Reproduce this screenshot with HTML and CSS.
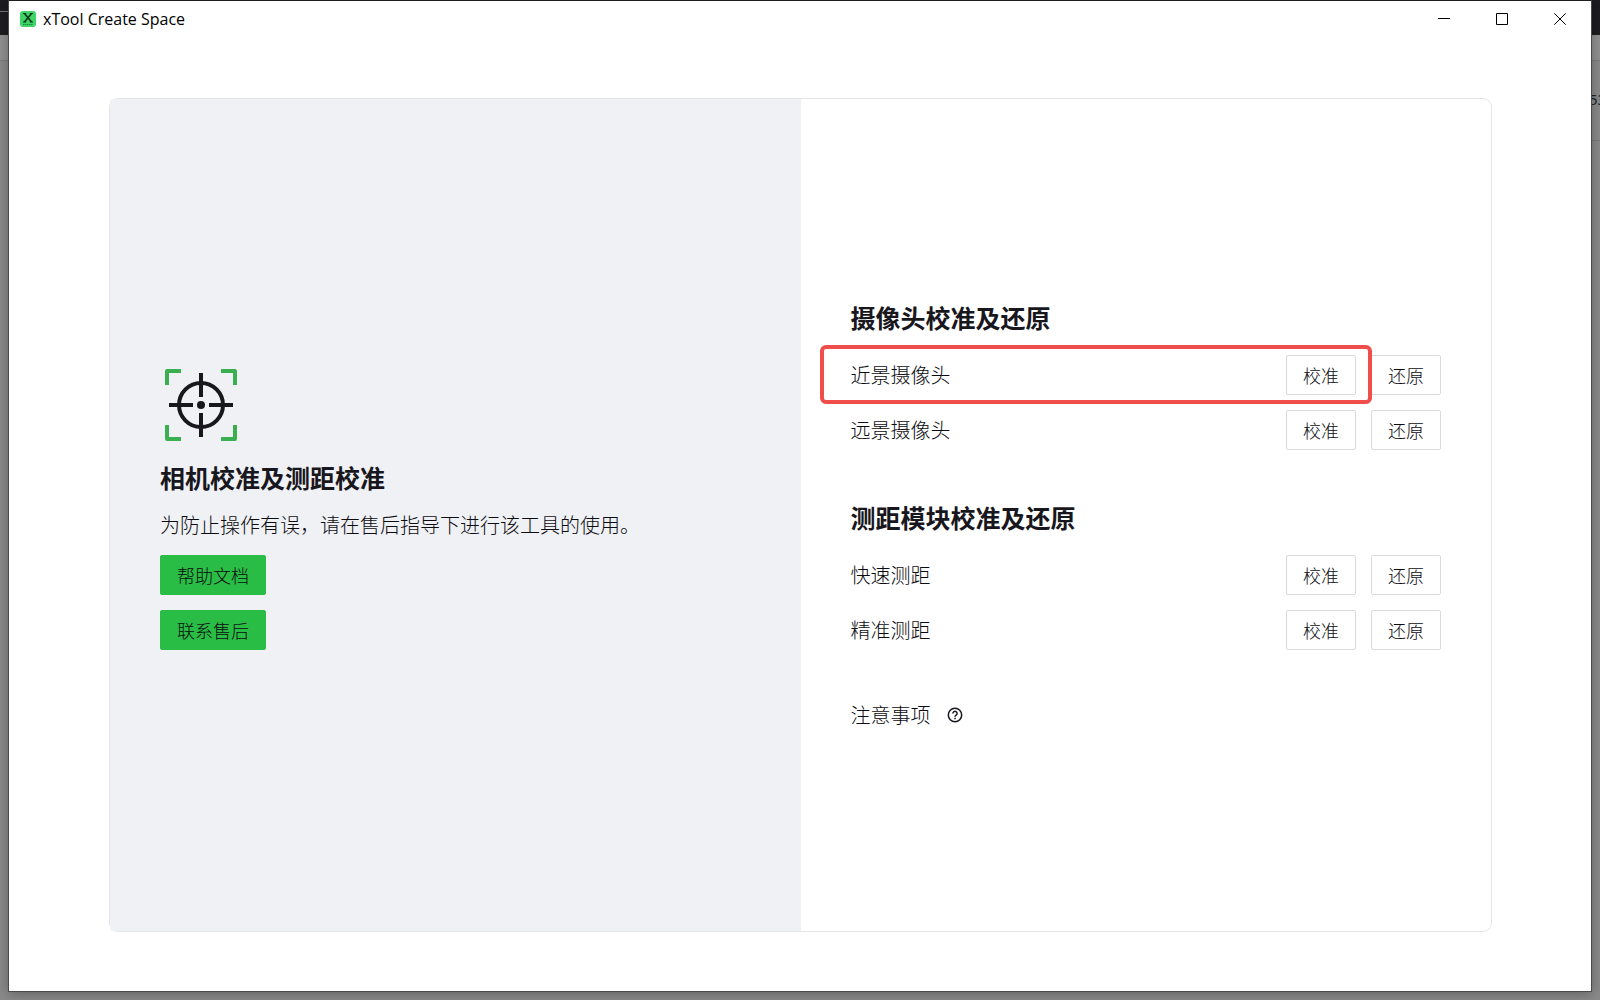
FILE: index.html
```html
<!DOCTYPE html>
<html lang="zh-CN">
<head>
<meta charset="utf-8">
<title>xTool Create Space</title>
<link rel="stylesheet" href="styles.css">
</head>
<body>
<div class="desktop">
  <span class="backdrop-number" aria-hidden="true">53</span>
  <div class="window">
    <header class="titlebar">
      <svg class="app-icon" viewBox="0 0 16 16" aria-hidden="true">
        <rect width="16" height="16" rx="3" fill="#3fd468"/>
        <path d="M3 2.500h3.200M9.800 2.500H13M3 11h3.200M9.800 11H13" stroke="#0b3d1c"/>
        <path d="M4.500 2.500l7 8.500M11.500 2.500l-7 8.500" stroke="#0b3d1c" stroke-width="1.800"/>
        <path d="M3 13.500h10" stroke="#1f8a42" stroke-dasharray="1.500 .5"/>
      </svg>
      <span class="app-name">xTool Create Space</span>
      <div class="window-controls">
        <button class="control" type="button" aria-label="最小化"><svg viewBox="0 0 12 12"><path d="M0 5.500h12"/></svg></button>
        <button class="control" type="button" aria-label="最大化"><svg viewBox="0 0 12 12"><path d="M.5.5h11v11H.5z"/></svg></button>
        <button class="control" type="button" aria-label="关闭"><svg viewBox="0 0 12 12"><path d="M.3.3l11.400 11.400M11.700.3L.3 11.700"/></svg></button>
      </div>
    </header>
    <main class="content">
      <div class="card">
        <section class="intro">
          <svg class="target" viewBox="0 0 80 80" fill="none" stroke-width="4" aria-hidden="true">
            <path d="M7 20V6H21M61 6H75V20M7 60V74H21M61 74H75V60" stroke="#3aaf50" stroke-linejoin="round"/>
            <g stroke="#18171d"><circle cx="41" cy="40" r="22"/><path d="M41 8v24M41 48v24M9 40h24M49 40h24"/></g>
            <circle cx="41" cy="40" r="4" fill="#18171d"/>
          </svg>
          <h1 class="heading intro-heading">相机校准及测距校准</h1>
          <p class="intro-text">为防止操作有误，请在售后指导下进行该工具的使用。</p>
          <button class="button button-primary" type="button">帮助文档</button>
          <button class="button button-primary" type="button">联系售后</button>
        </section>
        <section class="tools">
          <div class="group">
            <h2 class="heading">摄像头校准及还原</h2>
            <div class="row row-marked">
              <span class="label">近景摄像头</span>
              <button class="button" type="button">校准</button>
              <button class="button" type="button">还原</button>
            </div>
            <div class="row">
              <span class="label">远景摄像头</span>
              <button class="button" type="button">校准</button>
              <button class="button" type="button">还原</button>
            </div>
          </div>
          <div class="group">
            <h2 class="heading">测距模块校准及还原</h2>
            <div class="row">
              <span class="label">快速测距</span>
              <button class="button" type="button">校准</button>
              <button class="button" type="button">还原</button>
            </div>
            <div class="row">
              <span class="label">精准测距</span>
              <button class="button" type="button">校准</button>
              <button class="button" type="button">还原</button>
            </div>
          </div>
          <div class="notes">
            <span>注意事项</span>
            <button class="help" type="button" aria-label="注意事项说明">
              <svg viewBox="0 0 16 16" fill="none" stroke="#18171d" stroke-width="1.500"><circle cx="8" cy="8" r="6.700"/><path d="M5.900 6.400a2.100 2.100 0 1 1 3.200 1.800C8.300 8.700 8 9 8 9.700M8 10.800v1.500"/></svg>
            </button>
          </div>
        </section>
      </div>
    </main>
  </div>
</div>
</body>
</html>
```
FILE: styles.css
```css
* {
  box-sizing: border-box;
}

body {
  margin: 0;
  color: #0c0b10;
  font: 300 20px/30px "Noto Sans CJK SC", sans-serif;
}

.desktop {
  position: relative;
  display: flex;
  min-height: 100vh;
  padding: 0 8px 8px;
  overflow: hidden;
  background:
    linear-gradient(#777, #777) 0 11px / 8px 1px no-repeat,
    linear-gradient(#7b7b7b, #7b7b7b) 100% 140px / 8px 1px no-repeat,
    linear-gradient(#1d1c1f 35px, #929292 35px, #929292 60px, #7d7d7d 60px, #7d7d7d 61px, #8a8a8a 61px);
}

.backdrop-number {
  position: absolute;
  top: 84px;
  left: calc(100% - 11px);
  color: #20242e;
  font: 15px/30px "Noto Sans", sans-serif;
}

.window {
  position: relative;
  display: flex;
  flex: 1;
  flex-direction: column;
  border: 1px solid #4a4a4a;
  border-top-color: #1d1c1f;
  background: #fff;
  box-shadow: 0 2px 12px rgba(0, 0, 0, 0.3);
}

.titlebar {
  display: flex;
  align-items: center;
  height: 36px;
  padding: 0 2px 0 11px;
}

.app-icon {
  width: 16px;
  height: 16px;
}

.app-name {
  margin-left: 7px;
  color: #000;
  font: 16px/24px "Open Sans", sans-serif;
}

.window-controls {
  display: flex;
  margin-left: auto;
}

.control {
  display: grid;
  width: 58px;
  height: 36px;
  place-items: center;
  padding: 0;
  border: 0;
  background: none;
}

.control svg {
  width: 12px;
  height: 12px;
  fill: none;
  stroke: #000;
}

.content {
  display: flex;
  flex: 1;
  padding: 61px 99px 59px 100px;
}

.card {
  display: flex;
  flex: 1;
  border: 1px solid #e4e5e8;
  border-radius: 9px;
}

.intro,
.tools {
  display: flex;
  flex: 1;
  flex-direction: column;
  justify-content: center;
  padding: 0 50px;
}

.intro {
  align-items: flex-start;
  border-radius: 3px 0 0 3px;
  background: #eff1f5;
}

.target {
  width: 80px;
  height: 80px;
}

.heading {
  margin: 0 0 20px;
  color: #18171d;
  font-size: 25px;
  font-weight: 700;
  line-height: 36px;
}

.intro-heading {
  margin: 14px 0 15px;
}

.intro-text {
  margin: 0 0 15px;
}

.button {
  height: 40px;
  padding: 0 16px;
  border: 1px solid #d9dadd;
  border-radius: 2px;
  background: #fff;
  color: inherit;
  font: inherit;
  font-size: 18px;
}

.button-primary {
  margin-bottom: 15px;
  border-color: #2abd45;
  background: #2abd45;
}

.group {
  margin-bottom: 49px;
}

.row {
  position: relative;
  display: flex;
  gap: 15px;
  align-items: center;
}

.row + .row {
  margin-top: 15px;
}

.row-marked::after {
  position: absolute;
  inset: -10px 69px -9px -31px;
  border: 4px solid #ef4e4b;
  border-radius: 6px;
  content: "";
  pointer-events: none;
}

.label {
  flex: 1;
}

.notes {
  display: flex;
  gap: 16px;
  align-items: center;
  line-height: 32px;
}

.help {
  display: flex;
  padding: 0;
  border: 0;
  background: none;
}

.help svg {
  width: 16px;
  height: 16px;
}
```
